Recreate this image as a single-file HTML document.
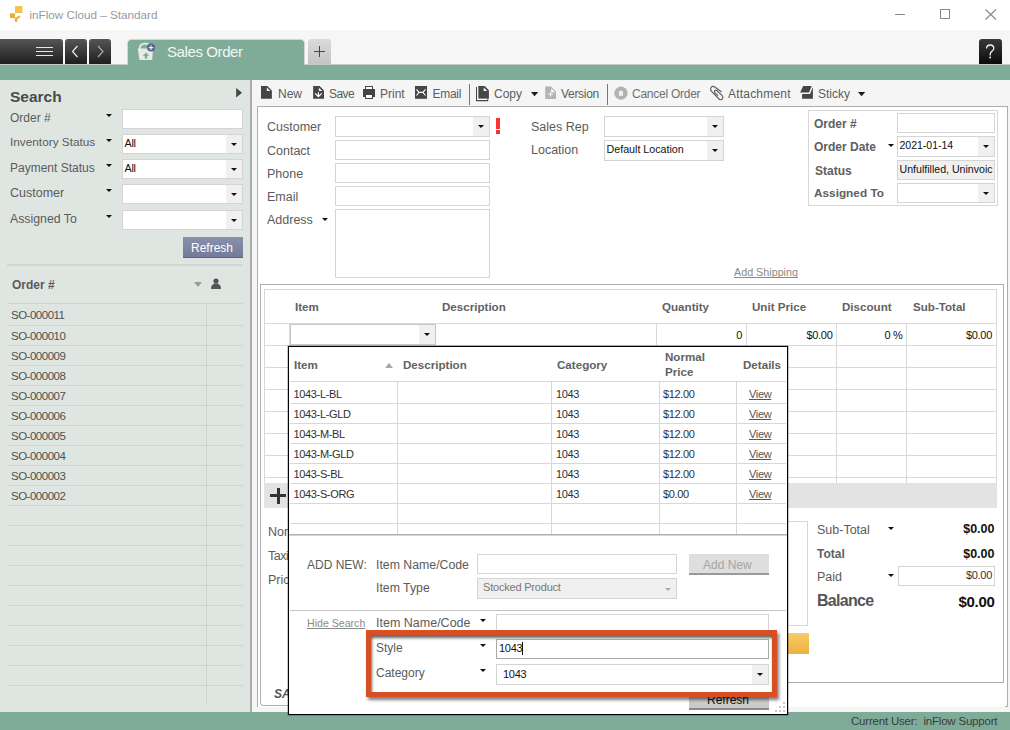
<!DOCTYPE html>
<html><head><meta charset="utf-8">
<style>
*{box-sizing:border-box;margin:0;padding:0}
html,body{width:1010px;height:730px;overflow:hidden;background:#fff;font-family:"Liberation Sans",sans-serif;position:relative}
.a{position:absolute}
.t{position:absolute;white-space:nowrap;line-height:1}
.lbl{color:#5b5b5b;font-size:12.5px}
.inp{position:absolute;background:#fff;border:1px solid #d4d4d4}
.dd{position:absolute;right:0;top:0;bottom:0;width:16px;background:#f0f0f0}
.dd:after{content:"";position:absolute;left:5px;top:8px;border-left:3px solid transparent;border-right:3px solid transparent;border-top:3px solid #111}
.tri{position:absolute;width:0;height:0;border-left:3px solid transparent;border-right:3px solid transparent;border-top:3px solid #111}
.tb{font-size:12px;color:#5c5c5c}
.b{font-weight:bold;font-size:12px;color:#606060}
.th{font-weight:bold;color:#626262}
.td{font-size:11px;color:#303030;letter-spacing:-0.35px}
.t{text-decoration-skip-ink:none}
.hl{position:absolute;height:1px;background:#d8d8d8}
.vl{position:absolute;width:1px;background:#d8d8d8}
</style></head><body>

<!-- TITLE BAR -->
<div class="a" style="left:0;top:0;width:1010px;height:30px;background:#fff"></div>
<svg class="a" style="left:0;top:0" width="40" height="30" viewBox="0 0 40 30"><rect x="15" y="6" width="7.4" height="7" fill="#f4c44e"/><rect x="10" y="13.3" width="5" height="4.8" fill="#efac32"/><rect x="14.9" y="17.6" width="2.4" height="4.2" fill="#eeaa30"/><path d="M16.3 18.6 L19.4 16.6" stroke="#efb238" stroke-width="1.9" stroke-linecap="round"/></svg>
<div class="t" style="left:29.5px;top:9px;font-size:11.7px;color:#969aa0">inFlow Cloud – Standard</div>
<div class="a" style="left:895px;top:14px;width:10px;height:1px;background:#888"></div>
<div class="a" style="left:940px;top:9px;width:10px;height:10px;border:1px solid #888"></div>
<svg class="a" style="left:985px;top:9px" width="12" height="11" viewBox="0 0 12 11"><path d="M0.5 0.5 L11 10.5 M11 0.5 L0.5 10.5" stroke="#888" stroke-width="1.1"/></svg>

<!-- TAB BAR -->
<div class="a" style="left:0;top:30px;width:1010px;height:35px;background:#f6f6f6"></div>
<div class="a" style="left:0;top:64px;width:1010px;height:1px;background:#c9c9c9"></div>
<div class="a" style="left:0;top:39px;width:63px;height:25px;background:linear-gradient(#555,#1e1e1e);border-radius:0 3px 0 0"></div>
<div class="a" style="left:36px;top:46.5px;width:17px;height:1.6px;background:#e6e6e6"></div>
<div class="a" style="left:36px;top:50.5px;width:17px;height:1.6px;background:#e6e6e6"></div>
<div class="a" style="left:36px;top:54.5px;width:17px;height:1.6px;background:#e6e6e6"></div>
<div class="a" style="left:65px;top:39px;width:22px;height:25px;background:linear-gradient(#555,#1e1e1e);border-radius:3px 3px 0 0"></div>
<svg class="a" style="left:65px;top:39px" width="22" height="25"><path d="M12.5 7 L7.5 12.5 L12.5 18" stroke="#eee" stroke-width="1.2" fill="none"/></svg>
<div class="a" style="left:89px;top:39px;width:22px;height:25px;background:linear-gradient(#555,#1e1e1e);border-radius:3px 3px 0 0"></div>
<svg class="a" style="left:89px;top:39px" width="22" height="25"><path d="M9 7 L14 12.5 L9 18" stroke="#aaa" stroke-width="1.2" fill="none"/></svg>
<!-- tab -->
<svg class="a" style="left:127px;top:39px" width="178" height="27" viewBox="0 0 178 27">
<path d="M0.5 27 L0.5 3 L3 0.5 L175 0.5 L177.5 3 L177.5 27" fill="#7eac99" stroke="#d5d5d5" stroke-width="1"/><rect x="1" y="25" width="176" height="2" fill="#7eac99"/>
</svg>
<svg class="a" style="left:136px;top:41px" width="22" height="21" viewBox="0 0 22 21">
<path d="M3.6 8 Q3.6 2.6 9 2.6 Q13 2.6 14 5" stroke="#e8ece9" stroke-width="1.8" fill="none"/>
<path d="M1.8 7.6 L17 7.6 L16.2 19 L3.4 19 Z" fill="#e6ebe8"/>
<path d="M10 11.6 L6.8 15 L8.8 15 L8.8 17.6 L11.2 17.6 L11.2 15 L13.2 15 Z" fill="#7eac99"/>
<circle cx="15" cy="6.6" r="4" fill="#5b6190"/>
<path d="M12.7 6.6 L17.3 6.6 M15 4.3 L15 8.9" stroke="#f0f0f4" stroke-width="1.1"/>
</svg>
<div class="t" style="left:167px;top:43.5px;font-size:15px;color:#f4f6f4;letter-spacing:-0.4px">Sales Order</div>
<div class="a" style="left:308px;top:39px;width:23px;height:25px;background:linear-gradient(#dadada,#c4c4c4);border-radius:3px 3px 0 0"></div>
<div class="a" style="left:314px;top:51px;width:11px;height:1.3px;background:#444"></div>
<div class="a" style="left:319px;top:46px;width:1.3px;height:11px;background:#444"></div>
<div class="a" style="left:979px;top:39px;width:23px;height:25px;background:linear-gradient(#3a3a3a,#0a0a0a);border-radius:3px 3px 0 0"></div>
<svg class="a" style="left:979px;top:39px" width="23" height="25" viewBox="0 0 23 25"><path d="M7.6 9.5 Q7.6 6 11.2 6 Q14.8 6 14.8 9.2 Q14.8 11.2 12.8 12.4 Q11.2 13.4 11.2 15.6 L11.2 16.5" stroke="#f2f2f2" stroke-width="1.3" fill="none"/><rect x="10.4" y="17.6" width="1.6" height="1.7" fill="#f2f2f2"/></svg>

<!-- STATUS BAR -->
<div class="a" style="left:0;top:712px;width:1010px;height:18px;background:#7eac99"></div>
<div class="t" style="left:851px;top:716px;font-size:11.5px;letter-spacing:-0.2px;color:#3c3c3c">Current User:&nbsp;&nbsp;inFlow Support</div>
<!-- GREEN STRIP -->
<div class="a" style="left:0;top:65px;width:1010px;height:15px;background:#7eac99"></div>

<!-- SIDEBAR -->
<div class="a" id="sidebar" style="left:0;top:80px;width:250px;height:632px;background:#dfe6e1"></div>
<div class="a" style="left:250px;top:80px;width:2px;height:632px;background:#ababab"></div>
<div class="t" style="left:10px;top:88.5px;font-size:15.5px;font-weight:bold;color:#4a4a4a">Search</div>
<svg class="a" style="left:236px;top:88px" width="7" height="10"><path d="M0.2 0 L6 4.8 L0.2 9.6 Z" fill="#444"/></svg>
<div class="t lbl" style="left:10px;top:112px;font-size:12px">Order #</div>
<div class="t lbl" style="left:10px;top:137px;font-size:11.8px">Inventory Status</div>
<div class="t lbl" style="left:10px;top:162px;font-size:12px">Payment Status</div>
<div class="t lbl" style="left:10px;top:187px;font-size:12.5px">Customer</div>
<div class="t lbl" style="left:10px;top:213px;font-size:12.3px">Assigned To</div>
<div class="tri" style="left:106px;top:114px"></div>
<div class="tri" style="left:106px;top:139px"></div>
<div class="tri" style="left:106px;top:164px"></div>
<div class="tri" style="left:106px;top:189px"></div>
<div class="tri" style="left:106px;top:215px"></div>
<div class="inp" style="left:122px;top:109px;width:121px;height:20px"></div>
<div class="inp" style="left:122px;top:134px;width:121px;height:20px"><div class="dd"></div><div class="t" style="left:1.5px;top:2.8px;font-size:10.8px;color:#111;letter-spacing:-0.3px">All</div></div>
<div class="inp" style="left:122px;top:159px;width:121px;height:20px"><div class="dd"></div><div class="t" style="left:1.5px;top:2.8px;font-size:10.8px;color:#111;letter-spacing:-0.3px">All</div></div>
<div class="inp" style="left:122px;top:184px;width:121px;height:20px"><div class="dd"></div></div>
<div class="inp" style="left:122px;top:210px;width:121px;height:20px"><div class="dd"></div></div>
<div class="a" style="left:183px;top:237px;width:60px;height:21px;background:linear-gradient(#8990aa,#737b98);border-bottom:1px solid #5d6580"></div>
<div class="t" style="left:191px;top:242px;font-size:12px;color:#fff">Refresh</div>
<div class="a" style="left:7px;top:264px;width:236px;height:2px;background:#d2d5d3"></div>
<div class="t" style="left:12px;top:279px;font-size:12px;font-weight:bold;color:#5a5a5a">Order #</div>
<div class="a" style="left:194px;top:282px;width:0;height:0;border-left:4.5px solid transparent;border-right:4.5px solid transparent;border-top:5px solid #9a9a9a"></div>
<svg class="a" style="left:210px;top:277px" width="12" height="13" viewBox="0 0 12 13"><circle cx="6" cy="4" r="2.6" fill="#555"/><path d="M1 12 Q1 6.5 6 6.5 Q11 6.5 11 12 Z" fill="#555"/></svg>
<div class="hl" style="left:7px;top:303px;width:236px;background:#cfd3d0"></div>
<div class="hl" style="left:7px;top:325px;width:236px;background:#cfd3d0"></div>
<div class="hl" style="left:7px;top:345px;width:236px;background:#cfd3d0"></div>
<div class="hl" style="left:7px;top:365px;width:236px;background:#cfd3d0"></div>
<div class="hl" style="left:7px;top:385px;width:236px;background:#cfd3d0"></div>
<div class="hl" style="left:7px;top:405px;width:236px;background:#cfd3d0"></div>
<div class="hl" style="left:7px;top:425px;width:236px;background:#cfd3d0"></div>
<div class="hl" style="left:7px;top:445px;width:236px;background:#cfd3d0"></div>
<div class="hl" style="left:7px;top:465px;width:236px;background:#cfd3d0"></div>
<div class="hl" style="left:7px;top:485px;width:236px;background:#cfd3d0"></div>
<div class="hl" style="left:7px;top:505px;width:236px;background:#cfd3d0"></div>
<div class="hl" style="left:7px;top:525px;width:236px;background:#cfd3d0"></div>
<div class="hl" style="left:7px;top:545px;width:236px;background:#cfd3d0"></div>
<div class="hl" style="left:7px;top:565px;width:236px;background:#cfd3d0"></div>
<div class="hl" style="left:7px;top:585px;width:236px;background:#cfd3d0"></div>
<div class="hl" style="left:7px;top:605px;width:236px;background:#cfd3d0"></div>
<div class="hl" style="left:7px;top:625px;width:236px;background:#cfd3d0"></div>
<div class="hl" style="left:7px;top:645px;width:236px;background:#cfd3d0"></div>
<div class="hl" style="left:7px;top:665px;width:236px;background:#cfd3d0"></div>
<div class="hl" style="left:7px;top:685px;width:236px;background:#cfd3d0"></div>
<div class="vl" style="left:206px;top:303px;height:402px;background:#cfd3d0"></div>
<div class="t" style="left:11px;top:310px;font-size:11.5px;color:#4f4f4f;letter-spacing:-0.5px">SO-000011</div>
<div class="t" style="left:11px;top:331px;font-size:11.5px;color:#4f4f4f;letter-spacing:-0.5px">SO-000010</div>
<div class="t" style="left:11px;top:351px;font-size:11.5px;color:#4f4f4f;letter-spacing:-0.5px">SO-000009</div>
<div class="t" style="left:11px;top:371px;font-size:11.5px;color:#4f4f4f;letter-spacing:-0.5px">SO-000008</div>
<div class="t" style="left:11px;top:391px;font-size:11.5px;color:#4f4f4f;letter-spacing:-0.5px">SO-000007</div>
<div class="t" style="left:11px;top:411px;font-size:11.5px;color:#4f4f4f;letter-spacing:-0.5px">SO-000006</div>
<div class="t" style="left:11px;top:431px;font-size:11.5px;color:#4f4f4f;letter-spacing:-0.5px">SO-000005</div>
<div class="t" style="left:11px;top:451px;font-size:11.5px;color:#4f4f4f;letter-spacing:-0.5px">SO-000004</div>
<div class="t" style="left:11px;top:471px;font-size:11.5px;color:#4f4f4f;letter-spacing:-0.5px">SO-000003</div>
<div class="t" style="left:11px;top:491px;font-size:11.5px;color:#4f4f4f;letter-spacing:-0.5px">SO-000002</div>

<!-- MAIN BG -->
<div class="a" style="left:252px;top:80px;width:758px;height:632px;background:#f5f5f5"></div>
<!-- toolbar -->
<svg class="a" style="left:256px;top:82px" width="22" height="22" viewBox="0 0 22 22"><path d="M5 4 L11.4 4 L15.9 8.5 L15.9 16.8 L5 16.8 Z" fill="#464646"/><path d="M10.8 5.5 L10.8 9.1 L14.4 9.1 Z" fill="#fff"/></svg>
<div class="t tb" style="left:278px;top:88px">New</div>
<svg class="a" style="left:307px;top:82px" width="22" height="22" viewBox="0 0 22 22"><path d="M6.1 4 L12.7 4 L17 8.4 L17 16.8 L6.1 16.8 Z" fill="#464646"/><path d="M11.9 5.8 L11.9 9.1 L15.2 9.1 Z" fill="#fff"/><path d="M8.1 11.3 L11.4 14.7 L14.7 11.3 M11.4 10.3 L11.4 14.7" stroke="#fff" stroke-width="1.2" fill="none"/></svg>
<div class="t tb" style="left:329px;top:88px;letter-spacing:-0.6px">Save</div>
<svg class="a" style="left:358px;top:82px" width="22" height="22" viewBox="0 0 22 22"><rect x="7" y="4" width="8" height="4" fill="#444"/><rect x="8" y="5" width="6" height="2.2" fill="#fff"/><rect x="5" y="7" width="12" height="8" fill="#444"/><rect x="7" y="12" width="8" height="5" fill="#444"/><rect x="8" y="13" width="6" height="3" fill="#fff"/></svg>
<div class="t tb" style="left:380px;top:88px">Print</div>
<svg class="a" style="left:410px;top:82px" width="22" height="22" viewBox="0 0 22 22"><rect x="5" y="4" width="12" height="12.8" fill="#464646"/><path d="M6.5 7.4 L9 10.4 L12.9 10.4 L15.5 7.4 M6.5 13.5 L9 10.4 M12.9 10.4 L15.5 13.5" stroke="#fff" stroke-width="1.1" fill="none"/></svg>
<div class="t tb" style="left:432.5px;top:88px;letter-spacing:-0.3px">Email</div>
<div class="a" style="left:469px;top:84px;width:1px;height:21px;background:#777"></div>
<svg class="a" style="left:472px;top:82px" width="22" height="22" viewBox="0 0 22 22"><path d="M6.2 4 L12.7 4 L16.9 8.3 L16.9 16.8 L6.2 16.8 Z" fill="#464646"/><path d="M11.7 5.6 L11.7 9.1 L15.2 9.1 Z" fill="#fff"/><path d="M4.6 5 L4.6 18.6 L15.6 18.6 L15.6 16.8" stroke="#464646" stroke-width="1.2" fill="none"/><rect x="5.3" y="5" width="0.9" height="12.9" fill="#fff"/><rect x="5.3" y="16.8" width="10" height="1.1" fill="#fff"/></svg>
<div class="t tb" style="left:494px;top:88px">Copy</div>
<svg class="a" style="left:531px;top:92px" width="8" height="5"><path d="M0 0 L7.2 0 L3.6 4.2 Z" fill="#1a1a1a"/></svg>
<svg class="a" style="left:544px;top:85px" width="14" height="15" viewBox="0 0 14 15"><path d="M1.2 1.6 L7 1.6 L12 6.8 L12 13.9 L1.2 13.9 Z" fill="#b4b4b4"/><path d="M7.2 3.4 L7.2 7.3 L11 7.3 Z" fill="#fff"/><path d="M6.6 6.8 L6.6 11.6 M4.2 9.2 L9 9.2" stroke="#f4f4f4" stroke-width="1.1"/></svg>
<div class="t tb" style="left:561px;top:88px;letter-spacing:-0.3px">Version</div>
<div class="a" style="left:607px;top:84px;width:1px;height:21px;background:#777"></div>
<svg class="a" style="left:610px;top:82px" width="22" height="22" viewBox="0 0 22 22"><circle cx="11" cy="11.2" r="6.6" fill="#b2b2b2"/><rect x="8.9" y="8.9" width="4.1" height="5" fill="#efefef"/></svg>
<div class="t tb" style="left:632px;top:88px;letter-spacing:-0.25px;color:#707070">Cancel Order</div>
<svg class="a" style="left:706px;top:82px" width="22" height="22" viewBox="0 0 22 22"><path d="M15.6 10 L8.8 5 Q6.2 3.4 4.9 5.8 Q4 7.6 5.6 9.4 L13 17 Q14.9 18.6 16.4 16.8 Q17.6 15.1 16 13.4 L10.6 8.5 Q9.4 7.7 8.6 8.7 Q8 9.7 9 10.8 L12 13.7" stroke="#5a5a5a" stroke-width="1.15" fill="none"/></svg>
<div class="t tb" style="left:728px;top:88px;letter-spacing:0.2px">Attachment</div>
<svg class="a" style="left:796px;top:82px" width="22" height="22" viewBox="0 0 22 22"><path d="M7.2 4.1 L15.7 4.1 L13 10.6 L4.1 10.6 Z" fill="#464646"/><path d="M16.9 5.3 L16.9 16.8 L6.1 16.8 L6.1 12 L14 12 Z" fill="#464646"/></svg>
<div class="t tb" style="left:818px;top:88px">Sticky</div>
<svg class="a" style="left:858px;top:92px" width="8" height="5"><path d="M0 0 L7.2 0 L3.6 4.2 Z" fill="#1a1a1a"/></svg>

<!-- form box -->
<div class="a" style="left:257px;top:106px;width:751px;height:601px;background:#fff;border:1px solid #adadad;border-bottom:none"></div><div class="a" style="left:1005px;top:706px;width:3px;height:1px;background:#adadad"></div>
<div class="t lbl" style="left:267px;top:121px">Customer</div>
<div class="t lbl" style="left:267px;top:144.7px">Contact</div>
<div class="t lbl" style="left:267px;top:167.7px">Phone</div>
<div class="t lbl" style="left:267px;top:190.7px">Email</div>
<div class="t lbl" style="left:267px;top:213.7px">Address</div>
<div class="tri" style="left:322px;top:217.5px"></div>
<div class="inp" style="left:335px;top:116px;width:155px;height:21px"><div class="dd"></div></div>
<div class="a" style="left:496px;top:118px;width:4px;height:11px;background:#fb3232"></div>
<div class="a" style="left:496px;top:130px;width:4px;height:4px;background:#fb3232"></div>
<div class="inp" style="left:335px;top:140px;width:155px;height:20px"></div>
<div class="inp" style="left:335px;top:163px;width:155px;height:20px"></div>
<div class="inp" style="left:335px;top:186px;width:155px;height:20px"></div>
<div class="inp" style="left:335px;top:209px;width:155px;height:69px"></div>

<div class="t lbl" style="left:531px;top:121px">Sales Rep</div>
<div class="t lbl" style="left:531px;top:144px">Location</div>
<div class="inp" style="left:604px;top:116px;width:120px;height:21px"><div class="dd"></div></div>
<div class="inp" style="left:604px;top:140px;width:120px;height:21px"><div class="dd"></div><div class="t" style="left:1.5px;top:3px;font-size:10.7px;color:#111">Default Location</div></div>
<div class="t" style="left:734px;top:267px;font-size:10.75px;color:#8a8a8a;text-decoration:underline">Add Shipping</div>

<div class="a" style="left:808px;top:110px;width:190px;height:96px;border:1px solid #d8d8d8"></div>
<div class="t lbl b" style="left:814px;top:118px">Order #</div>
<div class="t lbl b" style="left:814px;top:141px">Order Date</div>
<div class="t lbl b" style="left:815px;top:165px">Status</div>
<div class="t lbl b" style="left:814px;top:188px;font-size:11.8px">Assigned To</div>
<div class="tri" style="left:888px;top:144px"></div>
<div class="inp" style="left:897px;top:113px;width:98px;height:20px"></div>
<div class="inp" style="left:897px;top:136px;width:98px;height:21px"><div class="dd"></div><div class="t" style="left:1.5px;top:2.8px;font-size:10.5px;color:#111">2021-01-14</div></div>
<div class="inp" style="left:897px;top:160px;width:98px;height:20px;background:#f0f0f0"><div class="t" style="left:1.5px;top:3px;font-size:10.6px;color:#111">Unfulfilled, Uninvoic</div></div>
<div class="inp" style="left:897px;top:183px;width:98px;height:20px"><div class="dd"></div></div>
<!-- lower form -->
<div class="t lbl" style="left:268px;top:526px">Non</div>
<div class="t lbl" style="left:268px;top:550px;letter-spacing:-0.5px">Taxi</div>
<div class="t lbl" style="left:268px;top:574px">Price</div>
<div class="t" style="left:274px;top:688px;font-size:12px;font-weight:bold;font-style:italic;color:#555">SALES</div>
<div class="a" style="left:600px;top:521px;width:208px;height:105px;border:1px solid #d8d8d8;background:#fff"></div>
<div class="a" style="left:600px;top:633px;width:209px;height:21px;background:linear-gradient(#f6cd68,#eeb040)"></div>
<div class="t lbl" style="left:817px;top:524px">Sub-Total</div>
<div class="tri" style="left:888px;top:527px"></div>
<div class="t" style="right:15.5px;top:522.5px;font-size:12.5px;font-weight:bold;color:#111">$0.00</div>
<div class="t lbl b" style="left:817px;top:548px">Total</div>
<div class="t" style="right:15.5px;top:547.5px;font-size:12.5px;font-weight:bold;color:#111">$0.00</div>
<div class="t lbl" style="left:817px;top:571px">Paid</div>
<div class="tri" style="left:888px;top:574px"></div>
<div class="inp" style="left:898px;top:566px;width:97px;height:20px"><div class="t" style="right:2px;top:3px;font-size:11px;color:#333;letter-spacing:-0.3px">$0.00</div></div>
<div class="t" style="left:817px;top:593px;font-size:16px;font-weight:bold;color:#555;letter-spacing:-0.7px">Balance</div>
<div class="t" style="right:15.5px;top:594px;font-size:15px;font-weight:bold;color:#111;letter-spacing:-0.3px">$0.00</div>
<!--TABLE-->
<div class="a" style="left:260px;top:284px;width:744px;height:399px;border:1px solid #adadad;border-left:none;border-bottom:none"></div>
<div class="a" style="left:290px;top:682px;width:714px;height:1px;background:#adadad"></div>
<div class="a" style="left:260px;top:284px;width:40px;height:422px;border-left:1px solid #b0b0b0;border-bottom:1px solid #b0b0b0;border-bottom-left-radius:4px"></div>
<div class="a" style="left:264px;top:289px;width:733px;height:195px;border:1px solid #d8d8d8"></div>
<div class="hl" style="left:265px;top:323px;width:731px"></div>
<div class="hl" style="left:265px;top:345px;width:731px"></div>
<div class="hl" style="left:265px;top:367px;width:731px"></div>
<div class="hl" style="left:265px;top:389px;width:731px"></div>
<div class="hl" style="left:265px;top:411px;width:731px"></div>
<div class="hl" style="left:265px;top:433px;width:731px"></div>
<div class="hl" style="left:265px;top:455px;width:731px"></div>
<div class="hl" style="left:265px;top:477px;width:731px"></div>
<div class="vl" style="left:656px;top:323px;height:160px"></div>
<div class="vl" style="left:746px;top:323px;height:160px"></div>
<div class="vl" style="left:836px;top:323px;height:160px"></div>
<div class="vl" style="left:906px;top:323px;height:160px"></div>
<div class="vl" style="left:289px;top:323px;height:160px"></div>
<div class="a" style="left:264px;top:483px;width:733px;height:25px;background:#e3e3e3"></div>
<div class="a" style="left:270px;top:494px;width:16px;height:3px;background:#333"></div>
<div class="a" style="left:276.5px;top:487.5px;width:3px;height:16px;background:#333"></div>
<div class="t th" style="left:295px;top:300.5px;font-size:11.6px">Item</div>
<div class="t th" style="left:442px;top:300.5px;font-size:11.6px">Description</div>
<div class="t th" style="left:662px;top:300.5px;font-size:11.6px">Quantity</div>
<div class="t th" style="left:752px;top:300.5px;font-size:11.6px">Unit Price</div>
<div class="t th" style="left:842px;top:300.5px;font-size:11.6px">Discount</div>
<div class="t th" style="left:913px;top:300.5px;font-size:11.6px">Sub-Total</div>
<div class="t" style="right:268px;top:330px;font-size:11px;color:#111;letter-spacing:-0.3px">0</div>
<div class="t" style="right:177.5px;top:330px;font-size:11px;color:#111;letter-spacing:-0.3px">$0.00</div>
<div class="t" style="right:107.5px;top:330px;font-size:11px;color:#111;letter-spacing:-0.3px">0 %</div>
<div class="t" style="right:18px;top:330px;font-size:11px;color:#111;letter-spacing:-0.3px">$0.00</div>
<div class="inp" style="left:290px;top:324px;width:146px;height:21px;border-color:#c8c8c8"><div class="dd"></div></div>
<div class="a" style="left:288px;top:346px;width:500px;height:369px;background:#fff;border:1px solid #000;box-shadow:0 0 0 0.6px rgba(0,0,0,0.35)"></div>
<div class="hl" style="left:290px;top:381px;width:496px"></div>
<div class="hl" style="left:290px;top:403px;width:496px"></div>
<div class="hl" style="left:290px;top:423px;width:496px"></div>
<div class="hl" style="left:290px;top:443px;width:496px"></div>
<div class="hl" style="left:290px;top:463px;width:496px"></div>
<div class="hl" style="left:290px;top:483px;width:496px"></div>
<div class="hl" style="left:290px;top:503px;width:496px"></div>
<div class="hl" style="left:290px;top:523px;width:496px"></div>
<div class="vl" style="left:397px;top:381px;height:154px"></div>
<div class="vl" style="left:551px;top:381px;height:154px"></div>
<div class="vl" style="left:659px;top:381px;height:154px"></div>
<div class="vl" style="left:736px;top:381px;height:154px"></div>
<div class="a" style="left:289px;top:534px;width:498px;height:1px;background:#b0b0b0"></div>
<div class="a" style="left:289px;top:535px;width:498px;height:1px;background:#d4d4d4"></div>
<div class="t th" style="left:294px;top:358.5px;font-size:11.6px">Item</div>
<div class="t th" style="left:403px;top:358.5px;font-size:11.6px">Description</div>
<div class="t th" style="left:557px;top:358.5px;font-size:11.6px">Category</div>
<div class="t th" style="left:665px;top:351.0px;font-size:11.6px">Normal</div>
<div class="t th" style="left:665px;top:366.0px;font-size:11.6px">Price</div>
<div class="t th" style="left:743px;top:358.5px;font-size:11.6px">Details</div>
<div class="a" style="left:385px;top:363px;width:0;height:0;border-left:4.5px solid transparent;border-right:4.5px solid transparent;border-bottom:5px solid #a8a8a8"></div>
<div class="t td" style="left:293.5px;top:388.6px">1043-L-BL</div>
<div class="t td" style="left:556px;top:388.6px">1043</div>
<div class="t td" style="left:663px;top:388.6px">$12.00</div>
<div class="t td" style="left:749px;top:388.6px;color:#555;text-decoration:underline">View</div>
<div class="t td" style="left:293.5px;top:408.70000000000005px">1043-L-GLD</div>
<div class="t td" style="left:556px;top:408.70000000000005px">1043</div>
<div class="t td" style="left:663px;top:408.70000000000005px">$12.00</div>
<div class="t td" style="left:749px;top:408.70000000000005px;color:#555;text-decoration:underline">View</div>
<div class="t td" style="left:293.5px;top:428.8px">1043-M-BL</div>
<div class="t td" style="left:556px;top:428.8px">1043</div>
<div class="t td" style="left:663px;top:428.8px">$12.00</div>
<div class="t td" style="left:749px;top:428.8px;color:#555;text-decoration:underline">View</div>
<div class="t td" style="left:293.5px;top:448.90000000000003px">1043-M-GLD</div>
<div class="t td" style="left:556px;top:448.90000000000003px">1043</div>
<div class="t td" style="left:663px;top:448.90000000000003px">$12.00</div>
<div class="t td" style="left:749px;top:448.90000000000003px;color:#555;text-decoration:underline">View</div>
<div class="t td" style="left:293.5px;top:469.0px">1043-S-BL</div>
<div class="t td" style="left:556px;top:469.0px">1043</div>
<div class="t td" style="left:663px;top:469.0px">$12.00</div>
<div class="t td" style="left:749px;top:469.0px;color:#555;text-decoration:underline">View</div>
<div class="t td" style="left:293.5px;top:489.1px">1043-S-ORG</div>
<div class="t td" style="left:556px;top:489.1px">1043</div>
<div class="t td" style="left:663px;top:489.1px">$0.00</div>
<div class="t td" style="left:749px;top:489.1px;color:#555;text-decoration:underline">View</div>
<div class="t lbl" style="left:307px;top:559.3px;font-size:12px">ADD NEW:</div>
<div class="t lbl" style="left:376px;top:559.3px;font-size:12.3px">Item Name/Code</div>
<div class="t lbl" style="left:376px;top:582.3px;font-size:12.3px">Item Type</div>
<div class="inp" style="left:477px;top:554px;width:200px;height:20px"></div>
<div class="inp" style="left:477px;top:578px;width:200px;height:21px;background:#f0f0f0"><div class="t" style="left:5px;top:3.3px;font-size:11px;color:#777;letter-spacing:-0.2px">Stocked Product</div><div class="a" style="left:187px;top:9px;width:0;height:0;border-left:3.5px solid transparent;border-right:3.5px solid transparent;border-top:3.5px solid #aaa"></div></div>
<div class="a" style="left:689px;top:554px;width:80px;height:21px;background:#dedede;border-bottom:2px solid #9a9a9a"></div>
<div class="t" style="left:703px;top:559px;font-size:12px;color:#a5a5a5">Add New</div>
<div class="a" style="left:290px;top:610px;width:496px;height:1px;background:#c4c4c4"></div>
<div class="t" style="left:307px;top:618px;font-size:10.6px;color:#8a8a8a;text-decoration:underline">Hide Search</div>
<div class="t lbl" style="left:376px;top:617px">Item Name/Code</div>
<div class="tri" style="left:480px;top:619px"></div>
<div class="inp" style="left:496px;top:614px;width:273px;height:20px"></div>
<div class="a" style="left:689px;top:689px;width:80px;height:21px;background:linear-gradient(#d8d8d8,#c8c8c8);border-bottom:2px solid #8a8a8a"></div>
<div class="t" style="left:707px;top:694px;font-size:12px;color:#111">Refresh</div>
<div class="a" style="left:366px;top:630px;width:411px;height:67px;border:5px solid #d84f24;box-shadow:2px 3px 3px rgba(0,0,0,0.5), inset 1px 3px 3px rgba(0,0,0,0.6);background:#fff"></div>
<div class="t lbl" style="left:376px;top:642.3px;font-size:12px">Style</div>
<div class="t lbl" style="left:376px;top:667.3px;font-size:12px">Category</div>
<div class="tri" style="left:480px;top:644px"></div>
<div class="tri" style="left:480px;top:669px"></div>
<div class="inp" style="left:496px;top:639px;width:273px;height:20px;border-color:#a8a8a8"><div class="t" style="left:2px;top:2.8px;font-size:11px;color:#111;letter-spacing:-0.3px">1043</div><div class="a" style="left:25px;top:2px;width:1px;height:13px;background:#111"></div></div>
<div class="inp" style="left:496px;top:664px;width:273px;height:21px"><div class="dd"></div><div class="t" style="left:6px;top:3.7px;font-size:11px;color:#111;letter-spacing:-0.3px">1043</div></div>
<div class="a" style="left:783px;top:702px;width:2px;height:2px;background:#c8c8c8"></div>
<div class="a" style="left:779px;top:706px;width:2px;height:2px;background:#c8c8c8"></div>
<div class="a" style="left:783px;top:706px;width:2px;height:2px;background:#c8c8c8"></div>
<div class="a" style="left:775px;top:710px;width:2px;height:2px;background:#c8c8c8"></div>
<div class="a" style="left:779px;top:710px;width:2px;height:2px;background:#c8c8c8"></div>
<div class="a" style="left:783px;top:710px;width:2px;height:2px;background:#c8c8c8"></div>
<!--/TABLE-->


</body></html>
